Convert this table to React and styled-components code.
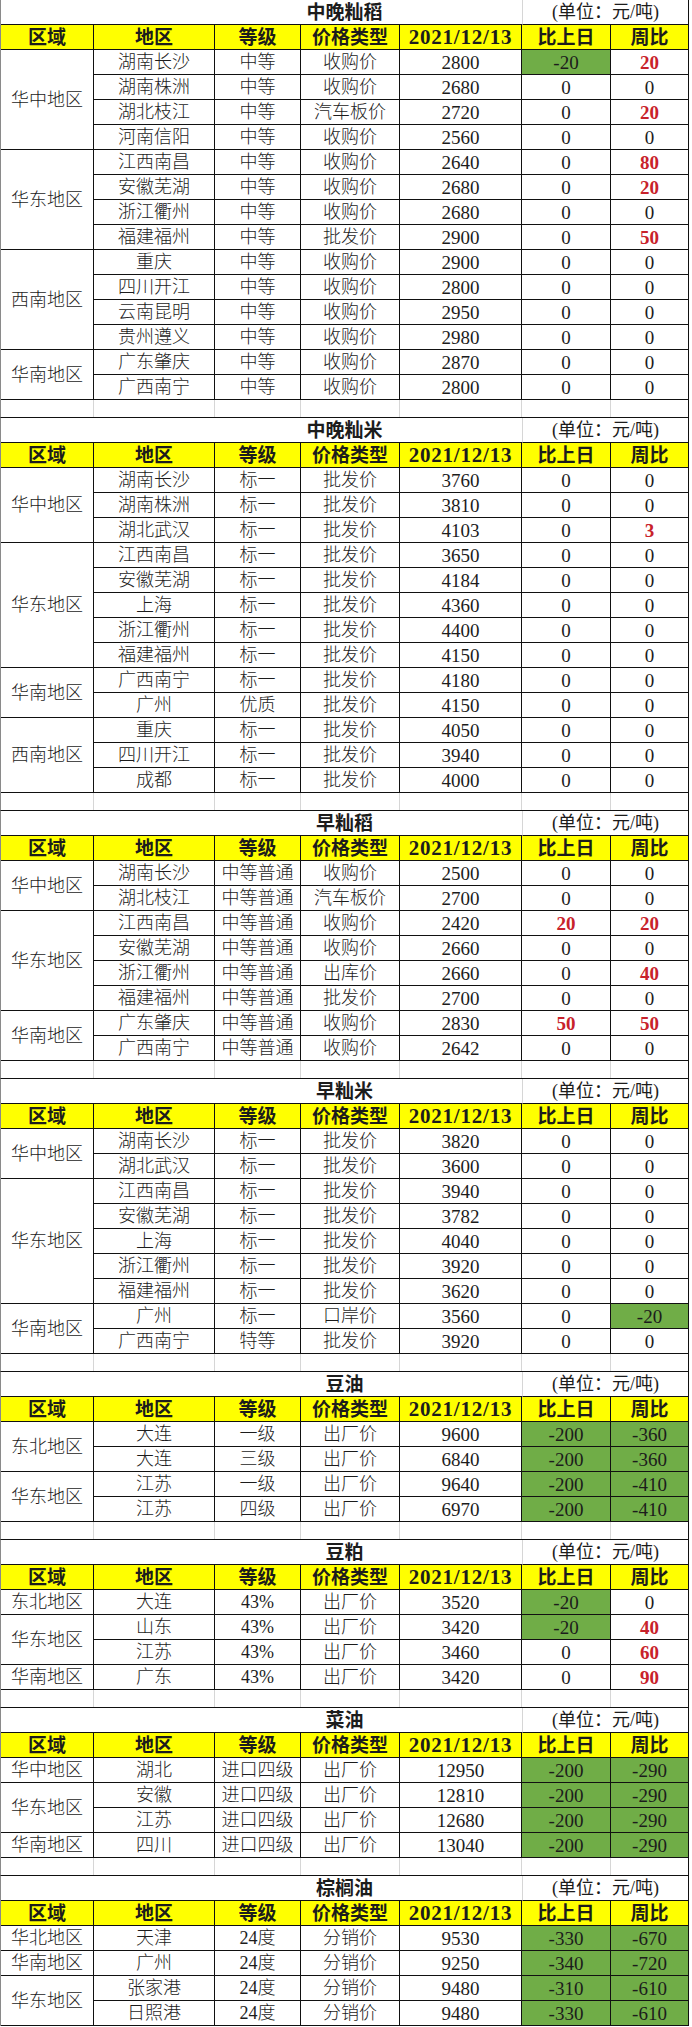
import React from 'react'
import styled, { createGlobalStyle, css } from 'styled-components'

const GlobalStyle = createGlobalStyle`
  body {
    margin: 0;
    background: #ffffff;
  }
`

const COLS = '93px 121px 86px 99px 122px 89px 78px'
const FONT = `"Liberation Serif", "Noto Sans CJK SC", serif`

const Sheet = styled.div`
  width: 689px;
  display: flex;
  flex-direction: column;
  font-family: ${FONT};
  color: #1c1c1c;
`

const Grid = styled.div`
  display: grid;
  grid-template-columns: ${COLS};
  grid-auto-rows: 25px;
  border-left: 1px solid #8a8a8a;
`

const Box = styled.div`
  box-sizing: border-box;
  display: flex;
  align-items: center;
  justify-content: center;
  border-right: 1px solid #111;
  border-bottom: 1px solid #111;
  white-space: nowrap;
  line-height: 1;
  font-weight: 300;
`

/* title sits in the merged A:E cell but is centred on the whole sheet */
const Title = styled(Box)`
  grid-column: 1 / 6;
  border-right: none;
  padding-left: 166px;
  font-size: 19px;
  font-weight: 700;
`

const Unit = styled(Box)`
  grid-column: 6 / 8;
  border-left: 1px solid #d6d6d6;
  font-size: 18px;
  font-weight: 400;
`

const Head = styled(Box)`
  background: #ffff00;
  font-size: 19px;
  font-weight: 700;
  ${(p) =>
    p.$date &&
    css`
      font-size: 21px;
      letter-spacing: 0.8px;
    `}
`

const Region = styled(Box)`
  grid-row: span ${(p) => p.$span};
  font-size: 18px;
`

const Cell = styled(Box)`
  font-size: ${(p) => (p.$num ? '19px' : '18px')};
  ${(p) =>
    p.$tone === 'down' &&
    css`
      background: #70ad47;
    `}
  ${(p) =>
    p.$tone === 'up' &&
    css`
      color: #c8222b;
      font-weight: 700;
    `}
`

const Spacer = styled.div`
  box-sizing: border-box;
  display: grid;
  grid-template-columns: ${COLS};
  height: 18px;
  border-left: 1px solid #8a8a8a;
  border-bottom: 1px solid #111;
`

const SpacerCell = styled.div`
  border-right: 1px solid ${(p) => (p.$last ? '#111' : '#d6d6d6')};
`

const HEADERS = ['区域', '地区', '等级', '价格类型', '2021/12/13', '比上日', '周比']

const sections = [
  {
    title: '中晚籼稻',
    groups: [
      ['华中地区', [
        ['湖南长沙', '中等', '收购价', 2800, -20, 20],
        ['湖南株洲', '中等', '收购价', 2680, 0, 0],
        ['湖北枝江', '中等', '汽车板价', 2720, 0, 20],
        ['河南信阳', '中等', '收购价', 2560, 0, 0],
      ]],
      ['华东地区', [
        ['江西南昌', '中等', '收购价', 2640, 0, 80],
        ['安徽芜湖', '中等', '收购价', 2680, 0, 20],
        ['浙江衢州', '中等', '收购价', 2680, 0, 0],
        ['福建福州', '中等', '批发价', 2900, 0, 50],
      ]],
      ['西南地区', [
        ['重庆', '中等', '收购价', 2900, 0, 0],
        ['四川开江', '中等', '收购价', 2800, 0, 0],
        ['云南昆明', '中等', '收购价', 2950, 0, 0],
        ['贵州遵义', '中等', '收购价', 2980, 0, 0],
      ]],
      ['华南地区', [
        ['广东肇庆', '中等', '收购价', 2870, 0, 0],
        ['广西南宁', '中等', '收购价', 2800, 0, 0],
      ]],
    ],
  },
  {
    title: '中晚籼米',
    groups: [
      ['华中地区', [
        ['湖南长沙', '标一', '批发价', 3760, 0, 0],
        ['湖南株洲', '标一', '批发价', 3810, 0, 0],
        ['湖北武汉', '标一', '批发价', 4103, 0, 3],
      ]],
      ['华东地区', [
        ['江西南昌', '标一', '批发价', 3650, 0, 0],
        ['安徽芜湖', '标一', '批发价', 4184, 0, 0],
        ['上海', '标一', '批发价', 4360, 0, 0],
        ['浙江衢州', '标一', '批发价', 4400, 0, 0],
        ['福建福州', '标一', '批发价', 4150, 0, 0],
      ]],
      ['华南地区', [
        ['广西南宁', '标一', '批发价', 4180, 0, 0],
        ['广州', '优质', '批发价', 4150, 0, 0],
      ]],
      ['西南地区', [
        ['重庆', '标一', '批发价', 4050, 0, 0],
        ['四川开江', '标一', '批发价', 3940, 0, 0],
        ['成都', '标一', '批发价', 4000, 0, 0],
      ]],
    ],
  },
  {
    title: '早籼稻',
    groups: [
      ['华中地区', [
        ['湖南长沙', '中等普通', '收购价', 2500, 0, 0],
        ['湖北枝江', '中等普通', '汽车板价', 2700, 0, 0],
      ]],
      ['华东地区', [
        ['江西南昌', '中等普通', '收购价', 2420, 20, 20],
        ['安徽芜湖', '中等普通', '收购价', 2660, 0, 0],
        ['浙江衢州', '中等普通', '出库价', 2660, 0, 40],
        ['福建福州', '中等普通', '批发价', 2700, 0, 0],
      ]],
      ['华南地区', [
        ['广东肇庆', '中等普通', '收购价', 2830, 50, 50],
        ['广西南宁', '中等普通', '收购价', 2642, 0, 0],
      ]],
    ],
  },
  {
    title: '早籼米',
    groups: [
      ['华中地区', [
        ['湖南长沙', '标一', '批发价', 3820, 0, 0],
        ['湖北武汉', '标一', '批发价', 3600, 0, 0],
      ]],
      ['华东地区', [
        ['江西南昌', '标一', '批发价', 3940, 0, 0],
        ['安徽芜湖', '标一', '批发价', 3782, 0, 0],
        ['上海', '标一', '批发价', 4040, 0, 0],
        ['浙江衢州', '标一', '批发价', 3920, 0, 0],
        ['福建福州', '标一', '批发价', 3620, 0, 0],
      ]],
      ['华南地区', [
        ['广州', '标一', '口岸价', 3560, 0, -20],
        ['广西南宁', '特等', '批发价', 3920, 0, 0],
      ]],
    ],
  },
  {
    title: '豆油',
    groups: [
      ['东北地区', [
        ['大连', '一级', '出厂价', 9600, -200, -360],
        ['大连', '三级', '出厂价', 6840, -200, -360],
      ]],
      ['华东地区', [
        ['江苏', '一级', '出厂价', 9640, -200, -410],
        ['江苏', '四级', '出厂价', 6970, -200, -410],
      ]],
    ],
  },
  {
    title: '豆粕',
    groups: [
      ['东北地区', [['大连', '43%', '出厂价', 3520, -20, 0]]],
      ['华东地区', [
        ['山东', '43%', '出厂价', 3420, -20, 40],
        ['江苏', '43%', '出厂价', 3460, 0, 60],
      ]],
      ['华南地区', [['广东', '43%', '出厂价', 3420, 0, 90]]],
    ],
  },
  {
    title: '菜油',
    groups: [
      ['华中地区', [['湖北', '进口四级', '出厂价', 12950, -200, -290]]],
      ['华东地区', [
        ['安徽', '进口四级', '出厂价', 12810, -200, -290],
        ['江苏', '进口四级', '出厂价', 12680, -200, -290],
      ]],
      ['华南地区', [['四川', '进口四级', '出厂价', 13040, -200, -290]]],
    ],
  },
  {
    title: '棕榈油',
    groups: [
      ['华北地区', [['天津', '24度', '分销价', 9530, -330, -670]]],
      ['华南地区', [['广州', '24度', '分销价', 9250, -340, -720]]],
      ['华东地区', [
        ['张家港', '24度', '分销价', 9480, -310, -610],
        ['日照港', '24度', '分销价', 9480, -330, -610],
      ]],
    ],
  },
]

const toneOf = (v) => (v < 0 ? 'down' : v > 0 ? 'up' : undefined)

function Change({ value }) {
  return (
    <Cell $num $tone={toneOf(value)}>
      {value}
    </Cell>
  )
}

function PriceSection({ title, groups }) {
  return (
    <Grid>
      <Title>{title}</Title>
      <Unit>(单位：元/吨)</Unit>
      {HEADERS.map((h) => (
        <Head key={h} $date={h.startsWith('2021')}>
          {h}
        </Head>
      ))}
      {groups.map(([region, rows]) => (
        <React.Fragment key={region}>
          <Region $span={rows.length}>{region}</Region>
          {rows.map(([area, grade, type, price, day, week], i) => (
            <React.Fragment key={i}>
              <Cell>{area}</Cell>
              <Cell>{grade}</Cell>
              <Cell>{type}</Cell>
              <Cell $num>{price}</Cell>
              <Change value={day} />
              <Change value={week} />
            </React.Fragment>
          ))}
        </React.Fragment>
      ))}
    </Grid>
  )
}

function BlankRow() {
  return (
    <Spacer>
      {HEADERS.map((h, i) => (
        <SpacerCell key={h} $last={i === HEADERS.length - 1} />
      ))}
    </Spacer>
  )
}

export default function App() {
  return (
    <>
      <GlobalStyle />
      <Sheet>
        {sections.map((s, i) => (
          <React.Fragment key={s.title}>
            {i > 0 && <BlankRow />}
            <PriceSection title={s.title} groups={s.groups} />
          </React.Fragment>
        ))}
      </Sheet>
    </>
  )
}
